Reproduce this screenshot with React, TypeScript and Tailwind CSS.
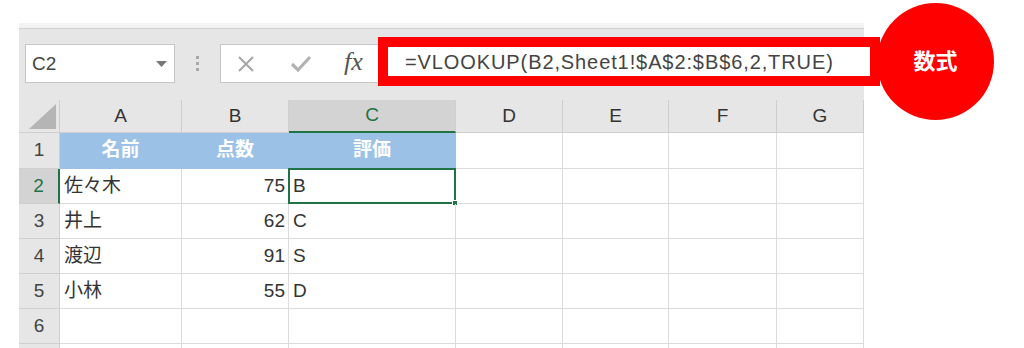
import React from "react";

const cols = ["A", "B", "C", "D", "E", "F", "G"];
const widths = [122, 107, 167, 107, 106, 108, 87];
const rows: { n: string; a: string; b: string; c: string }[] = [
  { n: "2", a: "佐々木", b: "75", c: "B" },
  { n: "3", a: "井上", b: "62", c: "C" },
  { n: "4", a: "渡辺", b: "91", c: "S" },
  { n: "5", a: "小林", b: "55", c: "D" },
  { n: "6", a: "", b: "", c: "" },
];

const font = { fontFamily: '"Liberation Sans", "Noto Sans CJK JP", sans-serif' };

export default function App() {
  return (
    <div
      className="relative w-[1024px] h-[348px] bg-white overflow-hidden"
      style={font}
    >
      <div className="ml-[19px] mt-[23px] w-[845px] flex flex-col">
        {/* top strip */}
        <div className="h-[6px] bg-[#f3f3f3] border-b border-[#d0d0d0]" />
        {/* formula bar */}
        <div className="h-[71px] bg-[#e6e6e6] flex items-start pt-[15px] pl-[6px]">
          <div className="shrink-0 w-[150px] h-[39px] bg-white border border-[#c6c6c6] flex items-center justify-between pl-[6px] pr-[7px]">
            <span className="text-[19px] text-[#444] leading-none">C2</span>
            <svg width="11" height="6" viewBox="0 0 11 6">
              <path d="M0 0 L11 0 L5.5 6 Z" fill="#777" />
            </svg>
          </div>
          <div className="shrink-0 w-[45px] h-[39px] flex flex-col items-center justify-center gap-[3px]">
            <div className="w-[3px] h-[3px] bg-[#a8a8a8]" />
            <div className="w-[3px] h-[3px] bg-[#a8a8a8]" />
            <div className="w-[3px] h-[3px] bg-[#a8a8a8]" />
          </div>
          <div className="shrink-0 w-[168px] h-[39px] bg-white border border-[#c6c6c6] flex items-center">
            <svg className="ml-[15px]" width="20" height="20" viewBox="0 0 20 20">
              <path d="M3 3 L17 17 M17 3 L3 17" stroke="#a6a6a6" strokeWidth="2" />
            </svg>
            <svg className="ml-[34px]" width="22" height="20" viewBox="0 0 22 20">
              <path d="M2 10 L8 16 L20 3" stroke="#b3b3b3" strokeWidth="3.2" fill="none" />
            </svg>
            <span
              className="ml-[32px] text-[26px] italic text-[#555] leading-none -mt-[3px]"
              style={{ fontFamily: '"Liberation Serif", serif' }}
            >
              fx
            </span>
          </div>
          <div className="shrink-0 -ml-[10px] -mt-[7px] w-[502px] h-[49px] border-[10px] border-[#ff0000] bg-white flex items-center pl-[17px]">
            <span className="text-[20px] text-[#444] leading-none whitespace-nowrap tracking-[0.9px]">
              =VLOOKUP(B2,Sheet1!$A$2:$B$6,2,TRUE)
            </span>
          </div>
        </div>
        {/* grid */}
        <div className="flex flex-col bg-white">
          {/* header */}
          <div className="flex h-[33px]">
            <div className="w-[41px] h-full bg-[#e6e6e6] border-r border-b border-[#cfcfcf] flex items-end justify-end p-[3px]">
              <svg width="27" height="25" viewBox="0 0 27 25">
                <path d="M27 0 L27 25 L0 25 Z" fill="#b5b5b5" />
              </svg>
            </div>
            {cols.map((c, i) => (
              <div
                key={c}
                className={
                  c === "C"
                    ? "h-full bg-[#d3d3d3] border-r border-[#cfcfcf] border-b-2 border-b-[#217346] flex items-center justify-center text-[19px] text-[#217346]"
                    : "h-full bg-[#e6e6e6] border-r border-b border-[#cfcfcf] flex items-center justify-center text-[19px] text-[#333]"
                }
                style={{ width: widths[i] }}
              >
                {c}
              </div>
            ))}
          </div>
          {/* row 1 */}
          <div className="flex h-[36px]">
            <div className="w-[41px] h-full bg-[#e6e6e6] border-r border-b border-[#cfcfcf] flex items-center justify-center text-[19px] text-[#444]">
              1
            </div>
            {["名前", "点数", "評価"].map((t, i) => (
              <div
                key={t}
                className="h-full bg-[#9bc2e6] border-r border-b border-[#9bc2e6] flex items-center justify-center text-[19px] font-bold text-white"
                style={{ width: widths[i] }}
              >
                {t}
              </div>
            ))}
            {widths.slice(3).map((w, i) => (
              <div
                key={i}
                className="h-full border-r border-b border-[#dcdcdc]"
                style={{ width: w }}
              />
            ))}
          </div>
          {rows.map((r) => {
            const sel = r.n === "2";
            return (
              <div key={r.n} className="flex h-[35px]">
                <div
                  className={
                    sel
                      ? "w-[41px] h-full bg-[#d3d3d3] border-r-2 border-r-[#217346] border-b border-b-[#cfcfcf] flex items-center justify-center text-[19px] text-[#217346]"
                      : "w-[41px] h-full bg-[#e6e6e6] border-r border-b border-[#cfcfcf] flex items-center justify-center text-[19px] text-[#444]"
                  }
                >
                  {r.n}
                </div>
                <div
                  className="h-full border-r border-b border-[#dcdcdc] flex items-center pl-[4px] text-[19px] text-[#333]"
                  style={{ width: widths[0] }}
                >
                  {r.a}
                </div>
                <div
                  className="h-full border-r border-b border-[#dcdcdc] flex items-center justify-end pr-[3px] text-[19px] text-[#333]"
                  style={{ width: widths[1] }}
                >
                  {r.b}
                </div>
                <div
                  className="relative h-full border-r border-b border-[#dcdcdc] flex items-center pl-[4px] text-[19px] text-[#333]"
                  style={{ width: widths[2] }}
                >
                  {r.c}
                  {sel && (
                    <>
                      <div className="absolute -left-[1px] -top-[1px] -right-[1px] -bottom-[1px] border-2 border-[#217346]" />
                      <div className="absolute -right-[3px] -bottom-[3px] w-[6px] h-[6px] bg-[#217346] border border-white" />
                    </>
                  )}
                </div>
                {widths.slice(3).map((w, i) => (
                  <div
                    key={i}
                    className="h-full border-r border-b border-[#dcdcdc]"
                    style={{ width: w }}
                  />
                ))}
              </div>
            );
          })}
          <div className="flex h-[20px]">
            <div className="w-[41px] h-full bg-[#e6e6e6] border-r border-[#cfcfcf]" />
            {widths.map((w, i) => (
              <div key={i} className="h-full border-r border-[#dcdcdc]" style={{ width: w }} />
            ))}
          </div>
        </div>
      </div>
      {/* annotation circle */}
      <div className="absolute left-[877px] top-[3px] w-[117px] h-[117px] rounded-full bg-[#ff0000] flex items-center justify-center">
        <span className="text-[22px] font-bold text-white leading-none">数式</span>
      </div>
    </div>
  );
}
